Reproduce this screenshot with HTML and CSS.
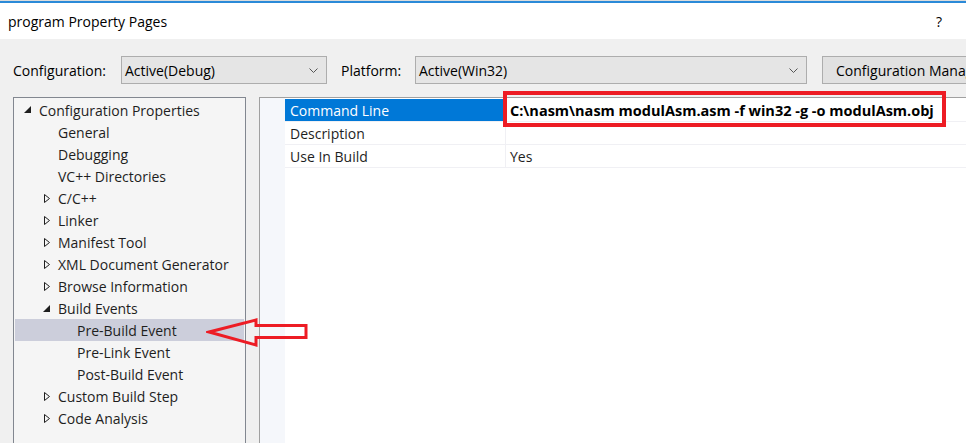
FILE: index.html
```html
<!DOCTYPE html>
<html>
<head>
<meta charset="utf-8">
<link rel="stylesheet" href="styles.css">
</head>
<body>
<div class="window">
  <div class="titlebar">
    <span class="title">program Property Pages</span>
    <span class="help">?</span>
  </div>
  <div class="toolbar">
    <span class="label lbl-config">Configuration:</span>
    <div class="combo combo-config"><span>Active(Debug)</span><svg class="chev" width="9" height="5" viewBox="0 0 9 5"><path d="M0.5 0.5 L4.5 4.5 L8.5 0.5" fill="none" stroke="#555" stroke-width="1"/></svg></div>
    <span class="label lbl-platform">Platform:</span>
    <div class="combo combo-platform"><span>Active(Win32)</span><svg class="chev" width="9" height="5" viewBox="0 0 9 5"><path d="M0.5 0.5 L4.5 4.5 L8.5 0.5" fill="none" stroke="#555" stroke-width="1"/></svg></div>
    <div class="button">Configuration Manager...</div>
  </div>
  <div class="main">
    <div class="tree">
      <div class="row lvl1"><svg class="exp" width="7" height="7" viewBox="0 0 7 7"><path d="M7 0 L7 7 L0 7 Z" fill="#1e1e1e"/></svg><span>Configuration Properties</span></div>
      <div class="row lvl2"><span>General</span></div>
      <div class="row lvl2"><span>Debugging</span></div>
      <div class="row lvl2"><span>VC++ Directories</span></div>
      <div class="row lvl2"><svg class="exp2" width="6" height="9" viewBox="0 0 6 9"><path d="M0.5 0.5 L5.5 4.5 L0.5 8.5 Z" fill="none" stroke="#1e1e1e" stroke-width="1"/></svg><span>C/C++</span></div>
      <div class="row lvl2"><svg class="exp2" width="6" height="9" viewBox="0 0 6 9"><path d="M0.5 0.5 L5.5 4.5 L0.5 8.5 Z" fill="none" stroke="#1e1e1e" stroke-width="1"/></svg><span>Linker</span></div>
      <div class="row lvl2"><svg class="exp2" width="6" height="9" viewBox="0 0 6 9"><path d="M0.5 0.5 L5.5 4.5 L0.5 8.5 Z" fill="none" stroke="#1e1e1e" stroke-width="1"/></svg><span>Manifest Tool</span></div>
      <div class="row lvl2"><svg class="exp2" width="6" height="9" viewBox="0 0 6 9"><path d="M0.5 0.5 L5.5 4.5 L0.5 8.5 Z" fill="none" stroke="#1e1e1e" stroke-width="1"/></svg><span>XML Document Generator</span></div>
      <div class="row lvl2"><svg class="exp2" width="6" height="9" viewBox="0 0 6 9"><path d="M0.5 0.5 L5.5 4.5 L0.5 8.5 Z" fill="none" stroke="#1e1e1e" stroke-width="1"/></svg><span>Browse Information</span></div>
      <div class="row lvl2"><svg class="exp2 filled" width="7" height="7" viewBox="0 0 7 7"><path d="M7 0 L7 7 L0 7 Z" fill="#1e1e1e"/></svg><span>Build Events</span></div>
      <div class="row lvl3 selected"><span>Pre-Build Event</span></div>
      <div class="row lvl3"><span>Pre-Link Event</span></div>
      <div class="row lvl3"><span>Post-Build Event</span></div>
      <div class="row lvl2"><svg class="exp2" width="6" height="9" viewBox="0 0 6 9"><path d="M0.5 0.5 L5.5 4.5 L0.5 8.5 Z" fill="none" stroke="#1e1e1e" stroke-width="1"/></svg><span>Custom Build Step</span></div>
      <div class="row lvl2"><svg class="exp2" width="6" height="9" viewBox="0 0 6 9"><path d="M0.5 0.5 L5.5 4.5 L0.5 8.5 Z" fill="none" stroke="#1e1e1e" stroke-width="1"/></svg><span>Code Analysis</span></div>
    </div>
    <div class="grid">
      <div class="margin"></div>
      <div class="props">
        <div class="prow selected"><div class="pname">Command Line</div><div class="pval bold">C:\nasm\nasm modulAsm.asm -f win32 -g -o modulAsm.obj</div></div>
        <div class="prow"><div class="pname">Description</div><div class="pval"></div></div>
        <div class="prow"><div class="pname">Use In Build</div><div class="pval">Yes</div></div>
      </div>
    </div>
  </div>
  <div class="redbox"></div>
  <svg class="arrow" width="110" height="32" viewBox="0 0 110 32">
    <path d="M3 15 L50 3 L50 8.5 L100 8.5 L100 20.5 L50 20.5 L50 28 Z" fill="none" stroke="#ed1c24" stroke-width="3" stroke-linejoin="miter"/>
  </svg>
</div>
</body>
</html>
```
FILE: styles.css
```css
html, body {
  margin: 0;
  padding: 0;
}
body {
  width: 966px;
  height: 443px;
  overflow: hidden;
  background: #f0f0f0;
  font-family: "Open Sans", "Noto Sans", sans-serif;
  font-size: 14px;
  color: #000;
}
.window {
  position: relative;
  width: 966px;
  height: 443px;
  overflow: hidden;
}
.titlebar {
  height: 36px;
  background: #fff;
  border-top: 1px solid #dcdcdc;
  box-shadow: inset 0 2px 0 #2b8ad8;
  display: flex;
  align-items: center;
  justify-content: space-between;
  padding: 2px 24px 0 8px;
  box-sizing: content-box;
}
.title {
  font-size: 14px;
  color: #000;
}
.help {
  font-size: 14px;
  color: #000;
}
.toolbar {
  display: flex;
  align-items: center;
  height: 28px;
  margin-top: 17px;
  padding-left: 13px;
}
.toolbar > * {
  flex: none;
}
.label {
  color: #000;
}
.lbl-config { width: 108px; }
.lbl-platform { margin-left: 14px; width: 74px; }
.combo {
  box-sizing: border-box;
  height: 28px;
  background: #e5e5e5;
  border: 1px solid #adadad;
  display: flex;
  align-items: center;
  justify-content: space-between;
  padding: 0 8px 0 3px;
}
.combo-config { width: 206px; }
.combo-platform { width: 392px; }
.button {
  box-sizing: border-box;
  height: 28px;
  margin-left: 15px;
  width: 200px;
  background: #e1e1e1;
  border: 1px solid #adadad;
  display: flex;
  align-items: center;
  padding-left: 13px;
  white-space: nowrap;
}
.main {
  display: flex;
  margin-top: 13px;
  padding-left: 13px;
  height: 360px;
}
.tree {
  box-sizing: border-box;
  width: 233px;
  flex: none;
  height: 360px;
  border: 1px solid #828790;
  background: #f5f5f5;
  padding: 1px 1px 0 1px;
}
.row {
  height: 22px;
  display: flex;
  align-items: center;
  position: relative;
  color: #1e1e1e;
  white-space: nowrap;
}
.row.lvl1 { padding-left: 24px; }
.row.lvl2 { padding-left: 43px; }
.row.lvl3 { padding-left: 62px; }
.row .exp {
  position: absolute;
  left: 9px;
  top: 7px;
}
.row .exp2 {
  position: absolute;
  left: 29px;
  top: 7px;
}
.row .exp2.filled {
  left: 28px;
  top: 8px;
}
.row.selected {
  background: #cccedb;
}
.grid {
  box-sizing: border-box;
  margin-left: 13px;
  width: 740px;
  flex: none;
  height: 360px;
  border: 1px solid #a0a0a0;
  border-right: none;
  background: #fff;
  display: flex;
}
.margin {
  width: 25px;
  flex: none;
  background: #f5f7fb;
}
.props {
  flex: 1;
}
.prow {
  display: flex;
  height: 23px;
  border-bottom: 1px solid #f0f0f4;
  box-sizing: border-box;
  color: #1e1e1e;
}
.prow:first-child {
  margin-top: 1px;
}
.pname {
  width: 221px;
  flex: none;
  padding-left: 5px;
  box-sizing: border-box;
  display: flex;
  align-items: center;
  border-right: 1px solid #f0f0f4;
}
.prow.selected .pname {
  background: #0078d7;
  color: #fff;
}
.pval {
  flex: 1;
  padding-left: 4px;
  display: flex;
  align-items: center;
  white-space: nowrap;
}
.bold {
  font-weight: 700;
  color: #000;
  font-size: 14.5px;
}
.redbox {
  position: absolute;
  left: 503px;
  top: 91px;
  width: 443px;
  height: 36px;
  box-sizing: border-box;
  border: 4px solid #ed1c24;
}
.arrow {
  position: absolute;
  left: 206px;
  top: 317px;
}
```
